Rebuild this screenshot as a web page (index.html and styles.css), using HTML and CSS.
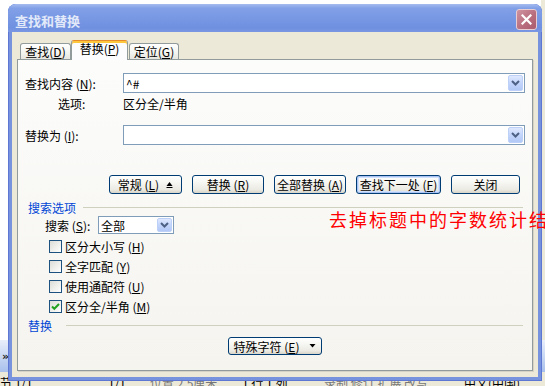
FILE: index.html
```html
<!DOCTYPE html>
<html lang="zh-CN">
<head>
<meta charset="UTF-8" />
<meta name="viewport" content="width=device-width, initial-scale=1" />
<title>查找和替换</title>
<link rel="stylesheet" href="styles.css">
</head>
<body>

<div class="word">
  <div class="doc-area">
    <div class="doc-page"></div>
    <div class="doc-side"></div>
  </div>
  <div class="toolbar"><span class="chevron">»</span></div>
  <div class="statusbar">
    <span class="st st-sec">节 1/1</span>
    <span class="st st-page">1/1</span>
    <span class="st st-pos">位置 2.5厘米</span>
    <span class="st st-dim">1 行 1 列</span>
    <span class="st st-mode">录制 修订 扩展 改写</span>
    <span class="st">中文(中国)</span>
  </div>
</div>

<div class="dialog">
  <div class="titlebar">
    <span class="title">查找和替换</span>
    <span class="close-btn">
      <svg width="11" height="11" viewBox="0 0 11 11"><path d="M1.5 1.5 L9.5 9.5 M9.5 1.5 L1.5 9.5" stroke="#fff" stroke-width="2.2" stroke-linecap="square"/></svg>
    </span>
  </div>

  <div class="dialog-body">
    <div class="tabs">
      <div class="tab tab-find">查找(<u>D</u>)</div>
      <div class="tab tab-replace active">替换(<u>P</u>)</div>
      <div class="tab tab-goto">定位(<u>G</u>)</div>
    </div>

    <div class="panel">
      <div class="row find-row">
        <span class="lbl">查找内容 (<u>N</u>):</span>
        <div class="combo">
          <span class="combo-text">^#</span>
          <span class="drop"><svg width="9" height="6" viewBox="0 0 9 6"><path d="M1 1 L4.5 4.5 L8 1" fill="none" stroke="#4d6185" stroke-width="2"/></svg></span>
        </div>
      </div>
      <div class="row opt-row">
        <span class="lbl lbl-opt">选项:</span>
        <span>区分全/半角</span>
      </div>
      <div class="row replace-row">
        <span class="lbl">替换为 (<u>I</u>):</span>
        <div class="combo">
          <span class="combo-text"></span>
          <span class="drop"><svg width="9" height="6" viewBox="0 0 9 6"><path d="M1 1 L4.5 4.5 L8 1" fill="none" stroke="#4d6185" stroke-width="2"/></svg></span>
        </div>
      </div>

      <div class="row btn-row">
        <span class="btn btn-more">常规 (<u>L</u>)
          <svg class="more-icon" width="7" height="8" viewBox="0 0 7 8"><path d="M3.5 1 L6.5 5 L0.5 5 Z" fill="#000"/><rect x="0.5" y="6" width="6" height="1" fill="#000"/></svg>
        </span>
        <span class="btn btn-rep">替换 (<u>R</u>)</span>
        <span class="btn btn-all">全部替换 (<u>A</u>)</span>
        <span class="btn btn-next default">查找下一处 (<u>F</u>)</span>
        <span class="btn btn-close">关闭</span>
      </div>

      <div class="group-head">搜索选项</div>

      <div class="row search-row">
        <span class="lbl-search">搜索 (<u>S</u>):</span>
        <div class="combo select">
          <span class="combo-text">全部</span>
          <span class="drop"><svg width="9" height="6" viewBox="0 0 9 6"><path d="M1 1 L4.5 4.5 L8 1" fill="none" stroke="#4d6185" stroke-width="2"/></svg></span>
        </div>
      </div>

      <div class="checks">
        <div class="check-row"><span class="cb"></span>区分大小写 (<u>H</u>)</div>
        <div class="check-row"><span class="cb"></span>全字匹配 (<u>Y</u>)</div>
        <div class="check-row"><span class="cb"></span>使用通配符 (<u>U</u>)</div>
        <div class="check-row"><span class="cb">
          <svg width="11" height="11" viewBox="0 0 11 11"><path d="M2 5.5 L4.3 7.8 L9 3" fill="none" stroke="#21a121" stroke-width="2"/></svg>
        </span>区分全/半角 (<u>M</u>)</div>
      </div>

      <div class="group-head group-replace">替换</div>

      <div class="row special-row">
        <span class="btn btn-special">特殊字符 (<u>E</u>)
          <svg class="special-arrow" width="7" height="4" viewBox="0 0 7 4"><path d="M0.5 0 L6.5 0 L3.5 3.5 Z" fill="#000"/></svg>
        </span>
      </div>
    </div>
  </div>
</div>

<div class="note">去掉标题中的字数统计结</div>

</body>
</html>
```

FILE: styles.css
```css
body {
  margin: 0;
  width: 545px;
  height: 386px;
  overflow: hidden;
  position: relative;
  font-family: "Noto Sans CJK SC", "Liberation Sans", sans-serif;
  font-size: 12px;
  color: #000;
  background: #fff;
}
u {
  text-decoration-thickness: 1px;
  text-underline-offset: 1px;
}

/* word window behind the dialog */
.word {
  display: flex;
  flex-direction: column;
  height: 386px;
}
.doc-area {
  flex: 1;
  display: flex;
}
.doc-page {
  flex: 1;
  background: #fff;
}
.doc-side {
  width: 4px;
  background: #ece9d8;
}
.toolbar {
  height: 32px;
  background: linear-gradient(#e9effb, #c9d8f4 50%, #a9c0ec);
  display: flex;
  align-items: center;
}
.chevron {
  margin-left: 2px;
  font: bold 11px "DejaVu Sans", sans-serif;
  color: #222;
}
.statusbar {
  height: 14px;
  box-sizing: border-box;
  padding-top: 4px;
  line-height: 14px;
  background: #ece9d8;
  display: flex;
  overflow: hidden;
  white-space: nowrap;
}
.st-sec { width: 108px; }
.st-page { width: 42px; }
.st-pos { width: 92px; color: #777; }
.st-dim { width: 82px; }
.st-mode { width: 140px; color: #777; }

/* dialog */
.dialog {
  position: absolute;
  left: 8px;
  top: 4px;
  width: 534px;
  height: 377px;
  box-sizing: border-box;
  padding: 0 4px 4px;
  background: #7893de;
  box-shadow: inset 0 0 0 1px #5d77d2;
  border-radius: 8px 8px 0 0;
  display: flex;
  flex-direction: column;
}
.titlebar {
  height: 28px;
  margin: 0 -4px;
  padding: 0 5px 0 7px;
  border-radius: 8px 8px 0 0;
  background: linear-gradient(#a6bcf0, #82a0e7 15%, #7898e4 50%, #6f90e0 85%, #7a97e2);
  display: flex;
  align-items: flex-start;
}
.title {
  margin-top: 4px;
  line-height: 26px;
  font-size: 13px;
  font-weight: bold;
  color: #e2e9f9;
}
.close-btn {
  margin-left: auto;
  margin-top: 5px;
  width: 21px;
  height: 21px;
  box-sizing: border-box;
  border: 1px solid #e8cdd3;
  border-radius: 3px;
  background: linear-gradient(135deg, #cf93a0, #b76b7b 60%, #a95d6e);
  display: flex;
  align-items: center;
  justify-content: center;
}
.dialog-body {
  flex: 1;
  background: #ece9d8;
  padding: 8px 5px 6px;
  display: flex;
  flex-direction: column;
}

/* tabs */
.tabs {
  height: 19px;
  padding-left: 3px;
  display: flex;
  align-items: flex-end;
  position: relative;
  z-index: 1;
}
.tab {
  height: 16px;
  box-sizing: border-box;
  border: 1px solid #919b9c;
  border-bottom: none;
  border-radius: 3px 3px 0 0;
  background: linear-gradient(#fff, #f3f3ef 60%, #e6e5df);
  line-height: 15px;
  text-align: center;
}
.tab-find { width: 51px; }
.tab-replace { width: 57px; }
.tab-goto { width: 50px; margin-left: 1px; }
.tab.active {
  height: 20px;
  margin-bottom: -1px;
  border-top: 1px solid #e68b2c;
  box-shadow: inset 0 2px 0 #ffc73c;
  background: #fcfcfe;
  line-height: 16px;
}

.panel {
  flex: 1;
  border: 1px solid #919b9c;
  box-shadow: 1px 1px 0 #d6d3c6;
  background: linear-gradient(#fcfcfb, #f5f4ef);
  padding: 13px 0 0 7px;
}
.row {
  display: flex;
  align-items: center;
}
.lbl {
  width: 98px;
  flex: none;
}
.lbl-opt {
  box-sizing: border-box;
  padding-left: 33px;
}
.find-row,
.opt-row {
  height: 20px;
}
.replace-row {
  height: 20px;
  margin-top: 12px;
}

.combo {
  width: 402px;
  height: 20px;
  box-sizing: border-box;
  border: 1px solid #7f9db9;
  background: #fff;
  display: flex;
  align-items: center;
}
.combo-text {
  flex: 1;
  padding-left: 2px;
  white-space: nowrap;
}
.drop {
  width: 15px;
  height: 16px;
  margin-right: 1px;
  box-sizing: border-box;
  border: 1px solid #bdd0f7;
  border-radius: 2px;
  background: linear-gradient(#dfe8fe, #c3d5fb 50%, #b2c8f6);
  display: flex;
  align-items: center;
  justify-content: center;
}
.select {
  width: 76px;
  height: 18px;
}
.select .drop {
  height: 14px;
}

/* buttons */
.btn-row {
  margin: 30px 0 0 84px;
  gap: 10px;
}
.btn {
  height: 19px;
  box-sizing: border-box;
  border: 1px solid #003c74;
  border-radius: 3px;
  background: linear-gradient(#fff, #f6f6f2 40%, #ebeae3 80%, #d8d4c8);
  display: flex;
  align-items: center;
  justify-content: center;
  white-space: nowrap;
}
.btn-more { width: 73px; }
.btn-rep { width: 72px; }
.btn-all { width: 72px; }
.btn-next { width: 85px; }
.btn-close { width: 69px; }
.btn.default {
  box-shadow: inset 0 0 0 1px #a9c4f4, inset 0 0 0 2px #d3e1fb;
}
.more-icon {
  margin-left: 7px;
}

.group-head {
  width: 495px;
  height: 14px;
  margin: 6px 0 0 3px;
  color: #0046d5;
  display: flex;
  align-items: center;
}
.group-head::after {
  content: "";
  flex: 1;
  height: 1px;
  margin-left: 7px;
  background: #d0d0bf;
}
.group-replace {
  margin-top: 2px;
}
.group-replace::after {
  margin-left: 14px;
}

.search-row {
  height: 18px;
  margin: 2px 0 0 20px;
}
.lbl-search {
  width: 53px;
}

.checks {
  margin: 2px 0 0 24px;
}
.check-row {
  height: 20px;
  display: flex;
  align-items: center;
}
.cb {
  width: 13px;
  height: 13px;
  box-sizing: border-box;
  margin-right: 3px;
  border: 1px solid #1c5180;
  background: linear-gradient(135deg, #dcdcd7, #fff);
  display: flex;
  align-items: center;
  justify-content: center;
}

.special-row {
  margin: 5px 0 0 203px;
}
.btn-special {
  width: 94px;
  height: 18px;
}
.special-arrow {
  margin-left: 10px;
}

/* red annotation over the screenshot */
.note {
  position: absolute;
  left: 329px;
  top: 210px;
  color: #f00;
  font-size: 18px;
  line-height: 18px;
  letter-spacing: 2px;
  white-space: nowrap;
}
```
